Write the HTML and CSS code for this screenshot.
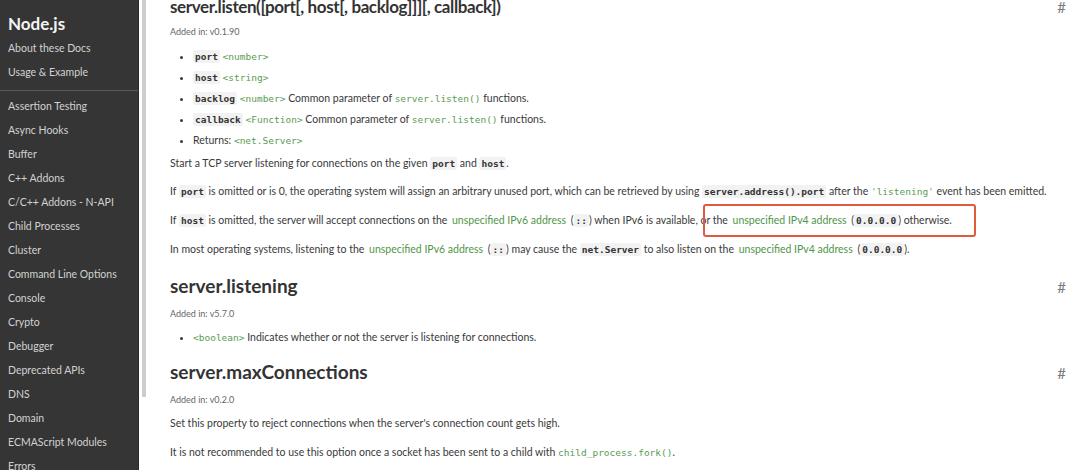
FILE: index.html
```html
<!DOCTYPE html>
<html>
<head>
<meta charset="utf-8">
<link rel="stylesheet" href="styles.css">
</head>
<body>
<nav class="sidebar">
  <div class="brand">Node.js</div>
  <ul class="nav">
    <li>About these Docs</li>
    <li>Usage &amp; Example</li>
  </ul>
  <div class="sep"></div>
  <ul class="nav">
    <li>Assertion Testing</li>
    <li>Async Hooks</li>
    <li>Buffer</li>
    <li>C++ Addons</li>
    <li>C/C++ Addons - N-API</li>
    <li>Child Processes</li>
    <li>Cluster</li>
    <li>Command Line Options</li>
    <li>Console</li>
    <li>Crypto</li>
    <li>Debugger</li>
    <li>Deprecated APIs</li>
    <li>DNS</li>
    <li>Domain</li>
    <li>ECMAScript Modules</li>
    <li>Errors</li>
  </ul>
</nav>
<div class="scroll"><div class="thumb"></div></div>
<main class="content">
  <section class="api first">
    <h2 class="head"><span class="title">server.listen([port[, host[, backlog]]][, callback])</span><span class="hash">#</span></h2>
    <div class="added">Added in: v0.1.90</div>
    <ul class="params">
      <li><code class="b">port</code> <span class="type">&lt;number&gt;</span></li>
      <li><code class="b">host</code> <span class="type">&lt;string&gt;</span></li>
      <li><code class="b">backlog</code> <span class="type">&lt;number&gt;</span> Common parameter of <span class="type">server.listen()</span> functions.</li>
      <li><code class="b">callback</code> <span class="type">&lt;Function&gt;</span> Common parameter of <span class="type">server.listen()</span> functions.</li>
      <li>Returns: <span class="type">&lt;net.Server&gt;</span></li>
    </ul>
    <p>Start a TCP server listening for connections on the given <code class="b">port</code> and <code class="b">host</code>.</p>
    <p>If <code class="b">port</code> is omitted or is 0, the operating system will assign an arbitrary unused port, which can be retrieved by using <code class="b">server.address().port</code> after the <span class="type">'listening'</span> event has been emitted.</p>
    <p>If <code class="b">host</code> is omitted, the server will accept connections on the <a>unspecified IPv6 address</a> (<code class="b">::</code>) when IPv6 is available, or the <a>unspecified IPv4 address</a> (<code class="b">0.0.0.0</code>) otherwise.</p>
    <p>In most operating systems, listening to the <a>unspecified IPv6 address</a> (<code class="b">::</code>) may cause the <code class="b">net.Server</code> to also listen on the <a>unspecified IPv4 address</a> (<code class="b">0.0.0.0</code>).</p>
  </section>
  <section class="api s2">
    <h2 class="head"><span class="title">server.listening</span><span class="hash">#</span></h2>
    <div class="added">Added in: v5.7.0</div>
    <ul class="params">
      <li><span class="type">&lt;boolean&gt;</span> Indicates whether or not the server is listening for connections.</li>
    </ul>
  </section>
  <section class="api s3">
    <h2 class="head"><span class="title">server.maxConnections</span><span class="hash">#</span></h2>
    <div class="added">Added in: v0.2.0</div>
    <p>Set this property to reject connections when the server's connection count gets high.</p>
    <p>It is not recommended to use this option once a socket has been sent to a child with <span class="type">child_process.fork()</span>.</p>
  </section>
</main>
<div class="mark"></div>
</body>
</html>
```

FILE: styles.css
```css
html, body {
  margin: 0;
  padding: 0;
}
body {
  width: 1080px;
  height: 470px;
  overflow: hidden;
  display: flex;
  background: #fff;
  font-family: Lato, "Open Sans", sans-serif;
  position: relative;
}
.sidebar {
  flex: none;
  width: 139px;
  background: #353535;
  border-right: 1px solid #2b2b2b;
  padding-left: 8px;
  box-sizing: border-box;
}
.brand {
  color: #f4f4f4;
  font-size: 17px;
  font-weight: 700;
  line-height: 24px;
  margin-top: 12px;
}
.nav {
  list-style: none;
  margin: 0;
  padding: 0;
}
.nav li {
  color: #d2d2d2;
  font-size: 10.5px;
  line-height: 24px;
  white-space: nowrap;
}
.sep {
  height: 1px;
  background: #5a5a5a;
  margin: 6px 0 3px -8px;
}
.scroll {
  width: 13px;
  flex: none;
  padding-left: 3px;
  box-sizing: border-box;
}
.thumb {
  width: 4px;
  height: 397px;
  background: #cdcdcd;
}
.content {
  flex: 1;
  padding: 0 12px 0 18px;
  color: #3a3a3a;
  font-size: 10.5px;
  min-width: 0;
}
.head {
  display: flex;
  justify-content: space-between;
  align-items: baseline;
  font-size: 19px;
  font-weight: 700;
  line-height: 24px;
  margin: 0;
  color: #333;
}
.first .title {
  font-size: 17px;
  letter-spacing: -0.4px;
}
.hash {
  color: #7a7a7a;
  font-size: 15px;
  font-weight: 400;
  padding-right: 2px;
}
.first .head { margin-top: -5px; }
.s2 .head { margin-top: 10.5px; }
.s3 .head { margin-top: 13.5px; }
.added {
  font-size: 9px;
  line-height: 14px;
  color: #666;
  margin-top: 6px;
}
.s2 .added, .s3 .added { margin-top: 8px; }
.params {
  margin: 6.5px 0 -2px;
  padding-left: 23px;
  list-style: disc;
}
.s2 .params { margin-top: 6.5px; }
.params li {
  line-height: 21px;
}
p {
  margin: 0;
  line-height: 28.7px;
  white-space: nowrap;
}
.s3 .added + p { margin-top: 2.5px; }
code {
  font-family: "DejaVu Sans Mono", "Liberation Mono", monospace;
  font-size: 9.5px;
  line-height: 1;
}
code.b {
  font-weight: 700;
  background: #f2f2f2;
  color: #333;
  padding: 1px 2px;
  border-radius: 2px;
}
.type {
  font-family: "DejaVu Sans Mono", "Liberation Mono", monospace;
  font-size: 9.5px;
  line-height: 1;
  color: #5a9c53;
}
a {
  color: #4f9648;
  padding: 0 2px;
}
.mark {
  position: absolute;
  left: 703px;
  top: 204px;
  width: 273px;
  height: 33px;
  box-sizing: border-box;
  border: 2px solid #e15a3f;
  border-radius: 3px;
}
```
